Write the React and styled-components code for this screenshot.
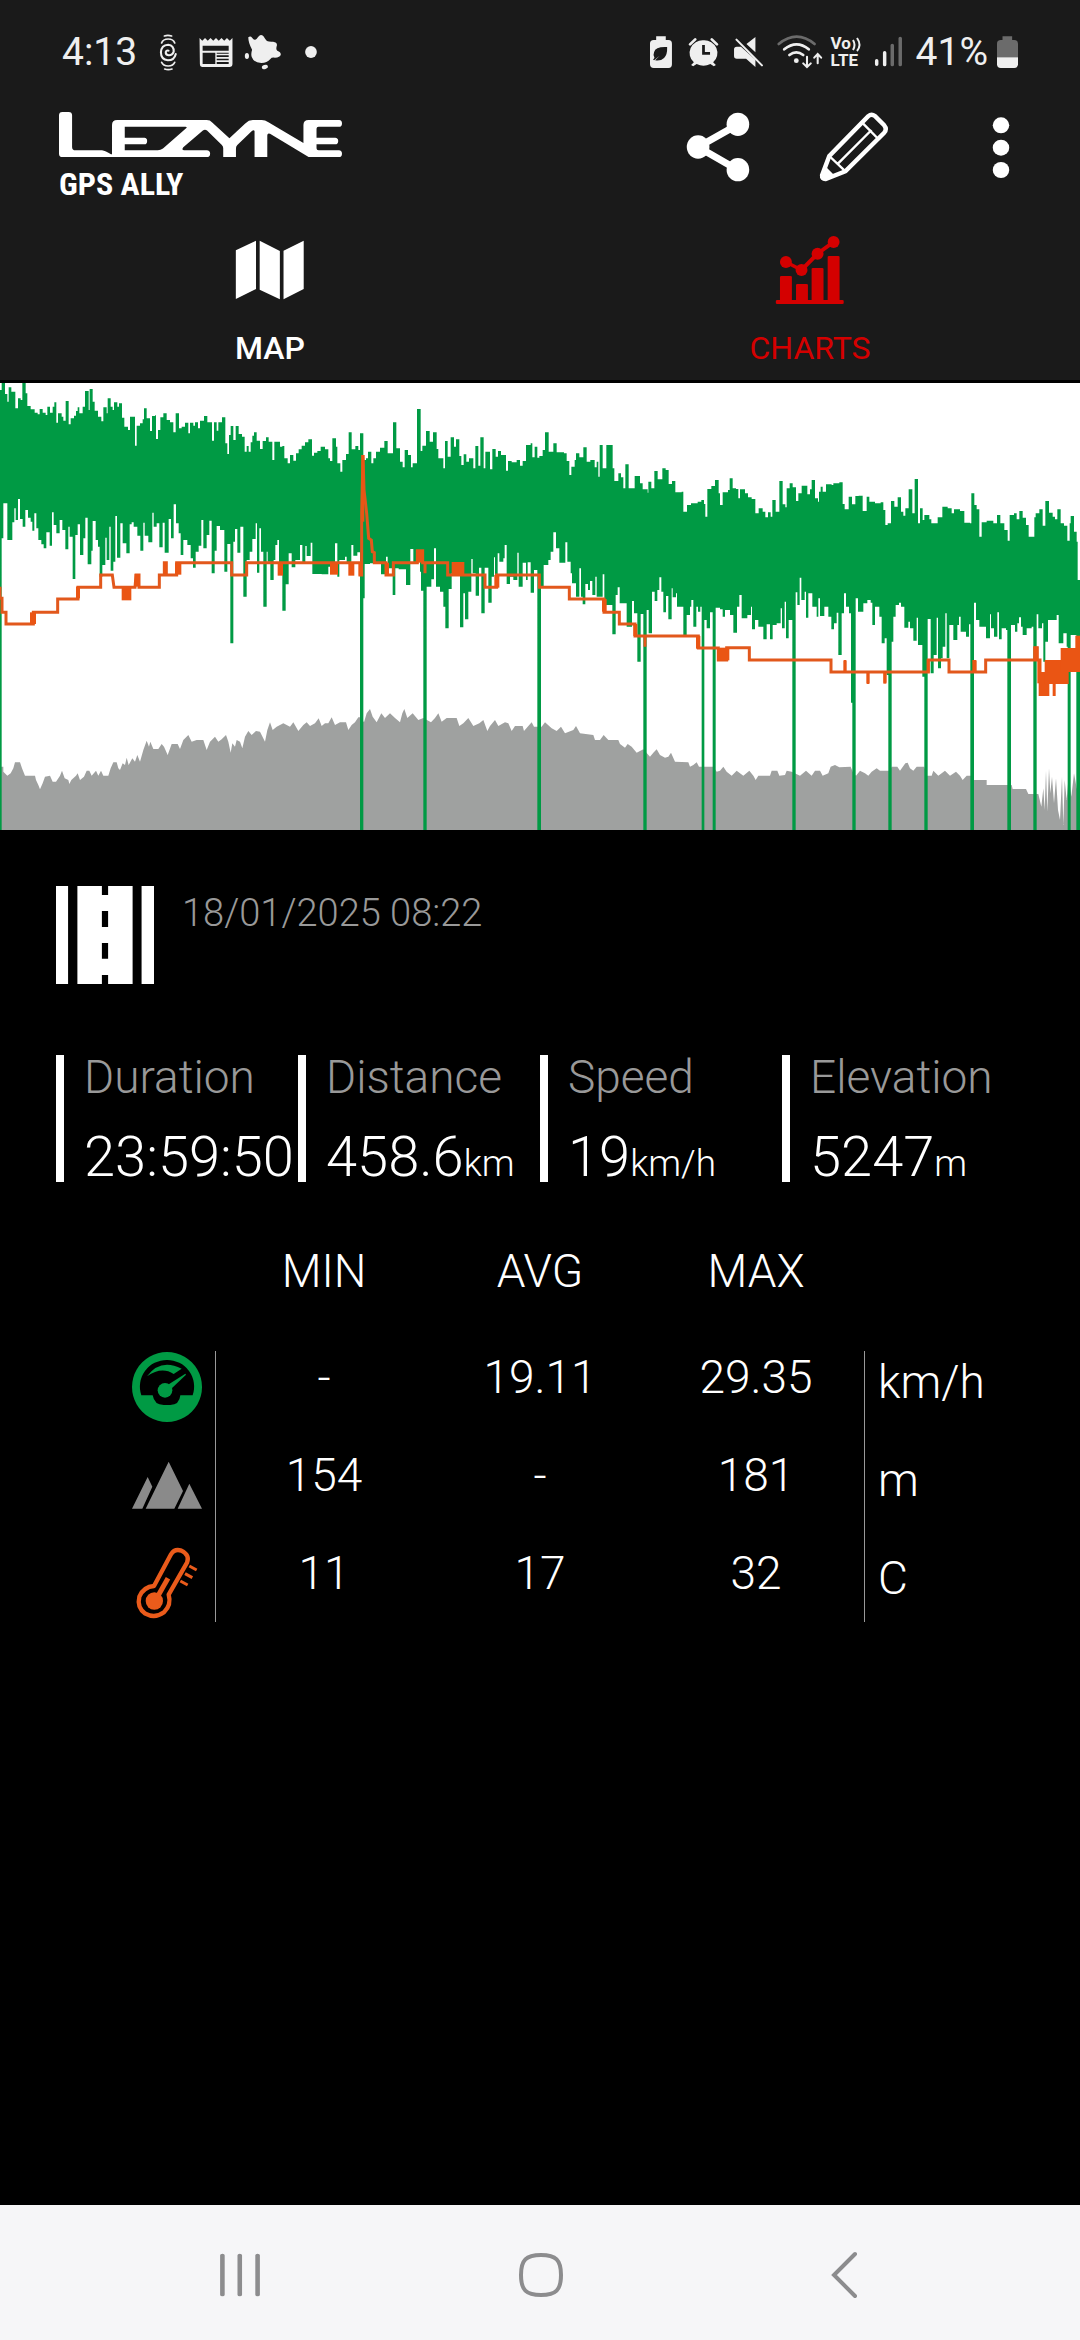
import React from "react";
import styled, { createGlobalStyle } from "styled-components";

const GlobalStyle = createGlobalStyle`
  *, *::before, *::after { box-sizing: border-box; }
  body {
    margin: 0;
    background: #000;
    color: #fff;
    font-family: Roboto, "Liberation Sans", sans-serif;
  }
  button {
    margin: 0;
    padding: 0;
    border: 0;
    background: none;
    color: inherit;
    font: inherit;
  }
`;

const Screen = styled.div`
  display: flex;
  flex-direction: column;
  min-height: 100vh;
`;

const Header = styled.header`
  background: #1a1a1a;
  padding-bottom: 12px;
`;

const StatusBar = styled.div`
  display: flex;
  justify-content: space-between;
  align-items: center;
  height: 104px;
  padding: 0 62px;
  color: #efefef;
`;

const StatusGroup = styled.div`
  display: flex;
  align-items: center;
  gap: ${(p) => p.$gap}px;
`;

const StatusText = styled.span`
  font-size: 39px;
  line-height: 48px;
`;

const NoticeIcons = styled.div`
  display: flex;
  margin-left: 7px;
`;

const Drawing = styled.svg`
  display: block;
  flex: none;
  width: ${(p) => p.$w}px;
  height: ${(p) => p.$h}px;
  overflow: visible;
  fill: currentColor;
`;

const Volte = styled.span`
  display: flex;
  flex-direction: column;
  width: 31px;
  font-size: 17px;
  font-weight: 700;
  line-height: 17px;
`;

const VolteTop = styled.span`
  display: flex;
  align-items: center;
`;

const Toolbar = styled.div`
  display: flex;
  justify-content: space-between;
  align-items: flex-start;
  padding: 8px 33px 0 59px;
`;

const Brand = styled.div`
  display: flex;
  flex-direction: column;
  gap: 7px;
`;

const BrandName = styled.span`
  font-family: "Liberation Sans Narrow", "Roboto Condensed", Roboto, sans-serif;
  font-size: 32px;
  font-weight: 700;
  line-height: 40px;
`;

const Actions = styled.div`
  display: flex;
  gap: 66px;
`;

const IconButton = styled.button`
  display: flex;
  justify-content: center;
`;

const Tabs = styled.div`
  display: grid;
  grid-template-columns: 1fr 1fr;
  padding-top: 30px;
`;

const Tab = styled.button`
  display: flex;
  flex-direction: column;
  align-items: center;
  gap: 22px;
  color: ${(p) => (p.$active ? "#d40000" : "#fff")};
  font-weight: ${(p) => (p.$active ? 400 : 500)};
`;

const TabLabel = styled.span`
  font-size: 32px;
  line-height: 40px;
`;

const ChartPanel = styled.section`
  margin-top: 3px;
  background: #fff;
`;

const ChartSvg = styled.svg`
  display: block;
  width: 100%;
  height: 447px;
`;

const Details = styled.main`
  flex: 1;
  padding-top: 56px;
`;

const RideHeader = styled.div`
  display: flex;
  align-items: flex-start;
  gap: 28px;
  padding: 0 56px;
`;

const RideDate = styled.time`
  color: #999;
  font-size: 38px;
  font-weight: 300;
  line-height: 54px;
`;

const Stats = styled.dl`
  display: grid;
  grid-template-columns: repeat(4, 1fr);
  margin: 71px 0 0;
  padding: 0 56px;
`;

const Stat = styled.div`
  display: flex;
  flex-direction: column;
  gap: 33px;
  min-width: 0;
  padding-left: 20px;
  border-left: 8px solid #fff;
  font-weight: 300;
  white-space: nowrap;
`;

const StatLabel = styled.dt`
  color: #999;
  font-size: 46px;
  line-height: 44px;
`;

const StatValue = styled.dd`
  margin: 0;
  font-size: 56px;
  line-height: 50px;
`;

const StatUnit = styled.span`
  font-size: 37px;
  line-height: 1px;
`;

const Summary = styled.table`
  width: 100%;
  margin-top: 63px;
  border-collapse: separate;
  border-spacing: 0;
  table-layout: fixed;
  font-size: 46px;
  font-weight: 300;
  line-height: 52px;
  text-align: center;
`;

const HeadCell = styled.th`
  padding: 0 0 54px;
  font-weight: 300;
`;

const Row = styled.tr`
  & > * { padding: 0 0 26px; vertical-align: top; }
  &:last-child > * { padding-bottom: 3px; }
`;

const MetricCell = styled.th`
  border-right: 1px solid #999;
  color: ${(p) => p.$color};
`;

const MetricIcon = styled.div`
  display: flex;
  justify-content: flex-end;
  padding-right: 12px;
`;

const UnitCell = styled.td`
  border-left: 1px solid #999;
  line-height: 62px;
  text-align: left;
`;

const UnitText = styled.span`
  padding-left: 13px;
`;

const NavBar = styled.nav`
  display: grid;
  grid-template-columns: repeat(3, 1fr);
  align-items: center;
  justify-items: center;
  height: 135px;
  padding: 5px 86px 0 89px;
  background: #f6f6f8;
  color: #8c8c8e;
`;

function Icon({ box, w, h, children }) {
  return (
    <Drawing viewBox={box} $w={w} $h={h} preserveAspectRatio="none" aria-hidden="true">
      {children}
    </Drawing>
  );
}

/* Chart samples: "x,y" pairs, three per-section strings, each section 1080 units wide. */
const SECTION = 1080;
const FLOOR = 1350;

const parse = (sections) =>
  sections.flatMap((text, i) =>
    text.trim().split(/\s+/).map((pair) => {
      const [x, y] = pair.split(",").map(Number);
      return [x + i * SECTION, y];
    })
  );

const SPEED_HIGH = parse([
  `0,30 5,9 15,42 22,65 26,22 34,35 46,85 54,55 62,60 67,9 77,40 82,78 92,88 104,98 113,103 119,87 128,98 137,105 142,80 150,98 158,80 163,67 169,128 174,100 185,110 190,122 197,63 206,133 212,115 222,107 228,93 233,82 238,100 248,80 255,33 266,90 269,27 278,65 284,92 294,110 304,124 310,82 320,100 323,55 332,80 338,90 342,67 352,80 357,70 366,113 373,140 384,150 390,110 405,197 410,137 420,130 428,118 432,85 440,115 450,153 456,108 466,105 468,177 474,150 481,112 490,100 500,120 510,127 520,157 527,100 537,145 545,140 555,128 565,160 570,128 580,137 585,127 594,145 600,122 612,108 622,127 636,182 642,127 650,152 655,127 666,112 676,190 682,222 687,165 692,138 700,180 707,138 716,162 726,170 734,215 740,198 746,215 752,187 757,167 762,157 770,182 780,207 788,183 798,172 806,185 817,240 823,185 840,200 847,198 853,235 863,250 870,225 880,242 888,220 896,208 905,197 915,187 925,178 936,227 942,218 952,213 962,200 975,208 985,235 990,243 997,175 1008,200 1012,250 1021,275 1027,240 1038,222 1046,157 1055,208 1066,198 1075,210`,
  `0,160 10,240 18,235 24,215 34,250 40,235 48,215 60,203 73,183 83,220 99,127 109,205 120,245 128,262 134,210 144,225 153,262 158,250 171,87 182,213 187,197 198,153 209,185 219,157 230,207 235,235 250,265 255,183 263,230 272,172 282,200 288,178 298,228 304,255 311,223 319,245 327,235 340,265 346,198 355,257 361,172 371,265 376,215 390,268 397,207 407,230 414,213 423,225 438,272 444,243 455,247 470,240 480,257 488,243 498,195 512,190 517,232 524,200 532,233 538,228 548,210 555,157 566,215 580,190 590,217 612,220 620,243 628,285 634,260 644,240 648,220 658,232 670,202 680,245 691,240 704,262 710,245 715,290 719,195 728,265 739,195 758,265 763,303 775,280 783,292 790,325 796,253 806,325 824,288 840,310 848,328 863,338 865,305 874,325 883,273 893,298 907,265 917,270 926,312 936,303 946,337 965,335 970,395 981,375 993,370 1013,365 1024,360 1032,372 1036,410 1042,327 1054,318 1065,300 1076,340`,
  `0,375 8,337 24,330 29,295 38,325 48,327 55,355 60,328 75,340 84,352 95,357 106,400 116,385 128,395 136,412 144,397 152,410 157,360 167,395 178,303 188,373 196,382 200,325 209,310 218,322 228,363 235,340 245,317 262,343 270,328 275,300 285,355 294,365 297,335 302,320 308,335 318,313 335,315 340,310 358,307 368,372 374,388 386,350 396,373 406,348 416,347 428,393 440,350 448,365 465,370 482,367 490,390 496,435 503,430 513,363 523,380 533,352 543,395 550,407 556,385 566,328 577,400 584,297 594,430 600,385 608,420 613,405 628,418 634,430 653,412 667,380 683,385 695,400 702,388 720,393 733,428 750,430 754,340 763,375 770,388 778,470 785,427 800,422 820,430 831,405 841,430 853,450 863,482 869,405 882,400 890,418 898,393 908,413 918,435 926,470 943,412 947,400 958,388 968,437 976,363 987,398 998,410 1005,418 1012,388 1022,430 1032,437 1042,482 1049,430 1052,408 1062,455 1070,485 1073,600`,
]);

const SPEED_LOW = parse([
  `0,1350 5,475 10,370 22,480 37,427 43,385 47,420 54,357 60,417 68,440 76,390 84,413 92,425 97,452 103,400 109,445 115,480 124,493 131,505 139,457 149,497 156,397 161,435 169,460 179,420 187,450 196,508 205,440 209,470 218,597 226,465 233,433 240,525 250,475 256,413 263,553 274,512 278,423 287,480 294,500 299,590 307,555 316,473 320,540 328,440 332,572 340,545 346,408 351,533 361,430 368,490 379,520 389,433 395,427 401,440 412,467 421,512 430,428 434,467 445,487 457,398 461,440 470,430 478,502 488,428 494,518 506,417 513,475 521,373 528,430 536,460 542,525 550,480 562,495 572,535 579,563 587,515 596,497 604,420 610,505 620,465 628,422 635,580 644,512 650,438 660,450 673,575 682,492 691,790 700,485 705,447 712,518 721,440 730,650 740,540 749,515 757,477 767,430 771,578 778,445 783,515 790,680 800,515 803,545 811,600 821,540 826,495 832,480 837,548 847,692 857,613 866,520 875,562 886,540 900,495 907,550 916,498 920,528 932,488 937,582 965,583 985,560 1005,490 1012,590 1018,540 1035,530 1040,550 1054,495 1060,527 1072,517`,
  `0,1350 10,655 14,552 30,550 63,583 78,530 83,565 98,645 106,565 116,568 138,615 151,507 160,550 170,535 180,575 183,632 190,1350 200,620 214,598 222,505 228,620 240,635 250,680 256,745 266,627 275,580 300,742 310,640 315,718 325,635 334,537 338,580 347,647 357,563 364,700 374,563 385,668 395,590 402,532 405,600 413,520 418,545 430,535 434,495 440,612 450,590 460,600 472,518 476,620 488,548 498,600 503,547 512,638 522,570 532,1350 543,620 551,555 565,540 572,515 580,457 588,505 598,548 616,487 622,545 632,580 636,610 648,650 658,565 663,650 668,673 676,612 684,630 690,603 697,645 706,590 710,650 728,583 733,675 757,763 767,645 773,622 779,670 800,740 816,663 822,700 832,845 842,702 850,1350 860,690 866,760 876,635 884,663 892,630 898,592 904,635 910,697 918,648 925,718 935,625 938,652 948,640 951,680 970,770 980,705 990,680 994,660 1000,740 1009,680 1014,695 1021,680 1025,1350 1033,720 1040,745 1050,697 1058,1350 1067,683`,
  `0,688 8,710 15,690 30,705 40,758 51,680 58,645 65,715 82,705 93,680 96,748 105,720 115,740 130,778 140,733 150,778 158,735 170,730 182,685 186,745 194,665 198,775 206,720 217,1350 227,637 232,675 239,593 244,660 254,635 258,713 265,640 277,680 290,710 295,655 300,708 313,680 325,710 334,748 342,730 350,698 355,825 365,700 372,640 378,680 387,700 393,968 397,1350 407,655 414,695 430,670 442,660 452,668 457,735 465,680 478,710 485,790 494,775 500,885 505,1350 515,785 520,710 527,675 537,668 543,680 553,743 565,725 570,745 580,782 590,713 594,795 607,890 613,1350 623,717 632,880 641,825 650,713 654,865 663,835 668,800 676,700 680,835 688,735 700,780 712,735 717,710 722,755 738,770 747,733 751,1350 762,668 768,720 778,740 798,775 810,703 813,745 822,770 832,697 837,778 845,745 858,750 862,1350 873,735 885,755 892,730 897,712 903,740 908,765 920,745 935,740 940,1350 950,703 955,745 966,730 970,845 976,785 984,720 1010,705 1016,790 1030,760 1040,800 1043,1350 1052,765 1069,1350`,
]);

const ALTITUDE = parse([
  `0,1160 10,1160 10,1175 22,1187 32,1180 40,1165 45,1147 60,1147 66,1165 75,1187 105,1187 108,1200 115,1215 120,1228 128,1210 135,1190 150,1187 158,1205 168,1205 180,1187 186,1172 194,1195 205,1200 208,1212 214,1200 228,1187 233,1180 240,1200 252,1190 260,1172 268,1172 275,1187 288,1172 295,1187 303,1172 310,1187 325,1187 332,1165 340,1147 350,1147 355,1165 360,1170 368,1150 375,1155 380,1133 386,1155 397,1135 405,1145 412,1125 420,1145 430,1110 440,1082 447,1100 451,1085 460,1107 475,1107 485,1092 492,1100 503,1125 515,1092 533,1092 540,1107 550,1080 565,1065 575,1085 590,1080 610,1080 620,1110 630,1085 645,1070 655,1085 665,1078 678,1065 685,1085 692,1118 697,1090 705,1100 710,1080 720,1085 727,1105 735,1070 745,1053 755,1065 768,1053 780,1055 795,1085 802,1050 810,1027 818,1050 830,1040 850,1030 870,1040 880,1027 895,1053 910,1035 920,1027 930,1038 945,1030 956,1015 965,1038 975,1030 985,1030 995,1012 1005,1035 1020,1027 1038,1027 1045,1050 1055,1035 1065,1027 1075,1012`,
  `0,1012 12,1027 20,1000 30,987 38,1010 50,1027 64,1000 75,1014 90,1000 105,1014 120,1027 127,1000 133,987 142,1014 158,1000 175,1020 190,1014 213,1027 225,1014 235,1000 245,1025 260,1014 290,1014 298,1038 310,1030 325,1014 340,1038 358,1030 370,1020 382,1053 390,1038 405,1020 415,1038 435,1027 445,1030 455,1053 465,1038 488,1038 492,1053 505,1038 515,1027 522,1040 545,1040 555,1027 575,1045 590,1053 603,1040 615,1060 640,1050 648,1038 660,1060 700,1065 705,1080 720,1080 731,1065 745,1080 775,1080 780,1092 795,1103 803,1092 815,1100 830,1118 850,1108 870,1130 880,1118 890,1108 900,1125 915,1133 925,1130 933,1118 945,1145 985,1147 990,1160 1000,1155 1010,1147 1017,1160 1060,1160 1070,1175`,
  `0,1172 10,1160 20,1175 35,1187 50,1172 70,1187 88,1172 100,1187 107,1200 115,1187 150,1187 155,1172 172,1172 178,1187 195,1185 200,1172 215,1175 240,1187 258,1172 275,1187 285,1172 300,1172 308,1187 325,1180 332,1160 345,1155 358,1162 392,1160 400,1180 408,1187 420,1172 435,1180 445,1187 455,1175 470,1165 480,1172 510,1172 515,1160 532,1160 540,1172 556,1150 563,1148 570,1165 580,1172 590,1160 613,1160 620,1187 635,1187 640,1172 655,1187 675,1172 690,1187 708,1175 720,1187 728,1200 740,1187 757,1187 760,1200 800,1200 800,1215 875,1215 878,1227 918,1227 925,1242 955,1242 964,1280 970,1225 974,1290 978,1172 982,1295 987,1165 991,1240 996,1190 1002,1270 1008,1195 1014,1290 1020,1320 1026,1190 1030,1335 1034,1200 1040,1260 1046,1187 1054,1250 1062,1180 1070,1225 1080,1240`,
]);

const TEMPERATURE = parse([
  `0,620 0,655 6,655 6,697 18,697 18,732 100,732 100,697 173,697 173,657 234,657 234,622 302,622 302,585 337,585 342,622 405,622 408,585 417,585 417,622 478,622 478,585 493,585 493,548 499,548 499,585 530,585 530,548 695,548 695,585 740,585 740,548 1075,548`,
  `0,548 0,585 5,585 5,400 9,225 12,330 20,400 26,475 34,480 37,515 43,518 43,548 78,548 78,585 100,585 100,548 172,548 172,512 188,512 188,548 195,548 195,580 195,548 263,548 263,585 375,585 375,622 410,622 410,585 538,585 538,622 628,622 628,657 732,657 732,697 778,697 778,732 825,732 825,768 855,768 855,800 855,768 1015,768 1015,804 1075,804 1075,840`,
  `0,840 20,840 20,803 88,803 88,840 333,840 333,876 375,876 375,842 375,876 444,876 444,910 444,876 495,876 495,908 495,876 625,876 625,840 687,840 687,876 765,876 765,842 765,876 797,876 797,840 945,840 945,803 952,803 952,840 960,840 960,876`,
]);

/* Spans where the temperature flickers between two readings: x, y, width, height. */
const FLICKER = [
  [[90, 697, 18, 35], [228, 620, 12, 35], [365, 622, 29, 39], [404, 582, 16, 38], [492, 546, 9, 38], [525, 548, 19, 36], [833, 548, 16, 39], [990, 548, 24, 36], [1045, 548, 18, 39], [1076, 548, 10, 39]],
  [[4, 225, 9, 200], [75, 548, 12, 38], [168, 510, 24, 38], [275, 546, 38, 40], [403, 585, 15, 38], [726, 657, 14, 38], [820, 732, 12, 36], [1008, 768, 13, 38], [1071, 804, 15, 38]],
  [[0, 803, 28, 38], [371, 840, 8, 36], [440, 876, 8, 36], [490, 876, 9, 35], [620, 838, 9, 40], [757, 840, 12, 36], [940, 800, 14, 40], [952, 840, 11, 70], [956, 876, 32, 72], [974, 840, 72, 72], [998, 912, 9, 36], [1022, 804, 58, 72], [1066, 767, 14, 40]],
];

const END = SECTION * 3;

function steps(points) {
  return points
    .map(([x, y], i) => `H${x}V${y}` + (i === points.length - 1 ? `H${END}` : ""))
    .join("");
}

function stepsBack(points) {
  let right = END;
  let d = "";
  for (let i = points.length - 1; i >= 0; i -= 1) {
    d += `L${right} ${points[i][1]}H${points[i][0]}`;
    right = points[i][0];
  }
  return d;
}

const speedArea = `M0 30${steps(SPEED_HIGH)}${stepsBack(SPEED_LOW)}Z`;
const altitudeArea = `M0 ${FLOOR}${ALTITUDE.map(([x, y]) => `L${x} ${y}`).join("")}V${FLOOR}Z`;
const temperatureLine = TEMPERATURE.map(([x, y], i) => `${i ? "L" : "M"}${x} ${y}`).join("");

function RideChart() {
  return (
    <ChartSvg viewBox="0 9 3240 1341" preserveAspectRatio="none" role="img" aria-label="Speed, elevation and temperature">
      <path d={altitudeArea} fill="#9fa1a0" />
      <path d={speedArea} fill="#009a44" />
      <path d={temperatureLine} fill="none" stroke="#e2581c" strokeWidth="9" />
      <g fill="#ea5514">
        {FLICKER.flatMap((spans, i) =>
          spans.map(([x, y, w, h]) => (
            <rect key={`${i}-${x}-${y}`} x={x + i * SECTION} y={y} width={w} height={h} />
          ))
        )}
      </g>
    </ChartSvg>
  );
}

function Status() {
  return (
    <StatusBar>
      <StatusGroup $gap={0}>
        <StatusText>4:13</StatusText>
        <NoticeIcons>
          <Icon box="421 96 139 120" w={48} h={40}>
            <g fill="none" stroke="currentColor" strokeWidth="5" strokeLinecap="round">
              <path d="M480 108q10-4 21 0M472 129Q476 117 491 117T510 129M472 187Q476 198 491 198T510 187M481 207q10 4 21 0" />
              <path d="M513 162Q509 181 490 181Q470 179 470 157Q471 135 491 134Q508 136 507 155Q503 167 492 166Q483 164 484 156Q486 150 492 152" strokeWidth="6" />
            </g>
          </Icon>
          <Icon box="560 96 140 120" w={48} h={40}>
            <path fillRule="evenodd" d="M582 114l8 8 8-8 8 8 8-8 8 8 8-8 8 8 8-8 8 8 8-8 8 8 8-8v78q0 9-9 9h-78q-8 0-8-9zM591 137v15h76v-15zM591 158v34h37v-34zM632 158v3h35v-3zM632 166v5h35v-5zM632 176v5h35v-5zM632 186v6h35v-6z" />
          </Icon>
          <Icon box="700 96 139 120" w={48} h={40}>
            <path d="M724 112q6-5 11 1q5 8 9 6q4-1 9-9q7-10 15-1q5 9 10 14q7 3 18 2q12 2 11 11q-4 13 1 16q11 4 10 12q-2 8-17 9q-10-1-13 4q-10 12-26 12q-22 0-28-18q-3-9 1-22q-11-20-11-37z" />
            <ellipse cx="720" cy="168" rx="6" ry="9" />
            <ellipse cx="772" cy="201" rx="9" ry="6" transform="rotate(-20 772 201)" />
          </Icon>
          <Icon box="839 96 140 120" w={48} h={40}>
            <ellipse cx="906" cy="156" rx="17" ry="18" />
          </Icon>
        </NoticeIcons>
      </StatusGroup>
      <StatusGroup $gap={13}>
        <StatusGroup $gap={14}>
          <Icon box="311 96 70 120" w={24} h={40}>
            <path fillRule="evenodd" d="M329 109h28v11h8q10 0 10 11v62q0 11-10 11h-43q-11 0-11-11v-62q0-11 11-11h7zM361 141q-34-2-38 15q-4 10 1 17l-4 6 3 2 16-14-13 14q16 3 26-7q10-10 9-33z" />
          </Icon>
          <Icon box="421 96 90 120" w={31} h={40}>
            <path fillRule="evenodd" d="M466 121a38 38 0 0 1 28 66l8 8-6 4-10-7q-20 11-40 0l-10 7-6-4 8-8a38 38 0 0 1 28-66zM462 135v29h23v-8h-15v-21z" />
            <path d="M427 133l15-15M505 133l-15-15" stroke="currentColor" strokeWidth="8" strokeLinecap="round" />
          </Icon>
          <Icon box="552 96 87 120" w={30} h={40}>
            <path d="M591 132l26-21v46zM555 148q0-8 8-8h12l42 39v22l-27-25h-27q-8 0-8-8z" />
            <path d="M562 119l74 77" stroke="currentColor" strokeWidth="6" strokeLinecap="round" />
          </Icon>
          <Icon box="680 96 116 120" w={40} h={40}>
            <g fill="none" stroke="currentColor" strokeWidth="8" strokeLinecap="round">
              <path d="M685 132q52-44 104 0" stroke="#6b6b6b" />
              <path d="M701 148q36-30 71 0M716 165q20-16 40 0" />
              <path d="M767 170v30m-11-10l11 11 11-11M798 190v-28m-10 11l10-11 10 11" strokeWidth="6" />
            </g>
            <circle cx="736" cy="182" r="7" />
          </Icon>
          <Volte>
            <VolteTop>
              Vo
              <Drawing viewBox="0 0 10 16" $w={10} $h={16} aria-hidden="true">
                <path d="M2 4q3 5 0 10M6 2q5 7 0 13" fill="none" stroke="currentColor" strokeWidth="2" />
              </Drawing>
            </VolteTop>
            <span>LTE</span>
          </Volte>
          <Icon box="967 96 78 120" w={27} h={40}>
            <g stroke="currentColor" strokeWidth="10" strokeLinecap="round">
              <path d="M969 182v11M992 158v36" />
              <path d="M1014 136v58M1037 115v79" stroke="#6b6b6b" />
            </g>
          </Icon>
        </StatusGroup>
        <StatusGroup $gap={9}>
          <StatusText>41%</StatusText>
          <Icon box="1327 96 61 120" w={21} h={40}>
            <path fill="#6b6b6b" d="M1343 109h28v11h6q11 0 11 11v41h-61v-41q0-11 11-11h5z" />
            <path d="M1327 172h61v21q0 11-11 11h-39q-11 0-11-11z" />
          </Icon>
        </StatusGroup>
      </StatusGroup>
    </StatusBar>
  );
}

function Logo() {
  return (
    <Drawing viewBox="171 336 822 134" $w={283} $h={45} preserveAspectRatio="none" role="img" aria-label="Lezyne">
      <path
        fillRule="evenodd"
        d="M171 346Q171 336 181 336H199Q209 336 209 346V440Q209 450 219 450H296Q306 451 322 462H325V375Q325 360 340 360H600Q610 360 616 367L666 414L712 370Q722 360 734 360H760Q770 360 778 366L881 428V375Q881 360 896 360H985Q993 361 993 370Q993 380 984 380H925Q919 380 919 386V413H973Q982 414 982 422Q982 432 973 432H919V444Q919 450 925 450H984Q993 451 993 460Q993 470 984 470H896L784 401Q776 398 776 406V470H739V393Q738 388 732 392L689 434Q685 438 685 444V470H648V444Q648 438 644 434L601 391Q595 386 589 391L532 441Q526 450 535 450H600Q610 451 610 460Q610 470 600 470H181Q171 470 171 460ZM362 380V413H419Q427 414 427 422Q427 432 419 432H362V450H458Q466 450 473 445L541 384Q544 380 538 380Z"
      />
    </Drawing>
  );
}

const GaugeIcon = () => (
  <Icon box="93 363 216 216" w={72} h={72}>
    <path fillRule="evenodd" d="M201 366a105 105 0 1 0 .1 0zM201 390a80 80 0 0 1 77 106h-37q-3 29-30 29h-20q-28 0-33-29h-34a80 80 0 0 1 77-106z" />
    <path d="M141 439q40-55 104-23l-24 16q-36-24-80 7z" />
    <circle cx="195" cy="481" r="22" />
    <path d="M204 464l52-33 2 3-45 43z" />
  </Icon>
);

const MountainIcon = () => (
  <Icon box="93 657 216 216" w={72} h={72}>
    <path d="M96 836l47-95 14 29-30 66zM137 836l69-141 43 88-26 53zM233 836l35-75 38 75z" />
  </Icon>
);

const ThermometerIcon = () => (
  <Icon box="93 951 216 216" w={72} h={72}>
    <g fill="none" stroke="currentColor">
      <path d="M162 1068L213 973q11-18 31-11q26 13 17 36L206 1094q9 30-14 53q-27 20-56 4q-26-19-18-51q13-30 44-32z" strokeWidth="13" strokeLinejoin="round" />
      <path d="M204 1045L172 1101" strokeWidth="15" />
      <path d="M268 1008l22 12M255 1031l22 12M241 1053l22 12" strokeWidth="9" />
    </g>
    <circle cx="163" cy="1113" r="26" />
  </Icon>
);

const STATS = [
  { label: "Duration", value: "23:59:50" },
  { label: "Distance", value: "458.6", unit: "km" },
  { label: "Speed", value: "19", unit: "km/h" },
  { label: "Elevation", value: "5247", unit: "m" },
];

const METRICS = [
  { name: "Speed", icon: GaugeIcon, color: "#009a44", values: ["-", "19.11", "29.35"], unit: "km/h" },
  { name: "Altitude", icon: MountainIcon, color: "#8a8a8a", values: ["154", "-", "181"], unit: "m" },
  { name: "Temperature", icon: ThermometerIcon, color: "#ea5b1b", values: ["11", "17", "32"], unit: "C" },
];

export default function App() {
  return (
    <Screen>
      <GlobalStyle />
      <Header>
        <Status />
        <Toolbar>
          <Brand>
            <Logo />
            <BrandName>GPS ALLY</BrandName>
          </Brand>
          <Actions>
            <IconButton aria-label="Share">
              <Icon box="415 336 204 210" w={70} h={70}>
                <path d="M574 374L459 441L574 509" fill="none" stroke="currentColor" strokeWidth="21" />
                <ellipse cx="575" cy="373" rx="33" ry="35" />
                <ellipse cx="459" cy="441" rx="33" ry="35" />
                <ellipse cx="575" cy="509" rx="33" ry="35" />
              </Icon>
            </IconButton>
            <IconButton aria-label="Edit">
              <Icon box="810 336 204 210" w={70} h={70}>
                <g fill="none" stroke="currentColor" strokeLinejoin="round">
                  <path d="M840 468L954 348Q963 340 973 348L1000 376Q1009 387 1000 398L887 514L830 537Q818 538 819 526Z" strokeWidth="13" />
                  <path d="M938 370L980 414M840 468L887 514M963 390L866 490" strokeWidth="7" />
                </g>
                <path d="M830 500L856 527L826 542L813 532Z" />
              </Icon>
            </IconButton>
            <IconButton aria-label="More options">
              <Icon box="1205 336 268 210" w={92} h={70}>
                <circle cx="1339" cy="376" r="24" />
                <circle cx="1339" cy="443" r="24" />
                <circle cx="1339" cy="510" r="24" />
              </Icon>
            </IconButton>
          </Actions>
        </Toolbar>
        <Tabs role="tablist">
          <Tab role="tab" aria-selected="false">
            <Icon box="118 42 157 216" w={72} h={72}>
              <path d="M122 91L166 62V207L122 237ZM174 62L218 93V238L174 209ZM226 92L270 62V207L226 238Z" />
            </Icon>
            <TabLabel>MAP</TabLabel>
          </Tab>
          <Tab role="tab" aria-selected="true" $active>
            <Icon box="1294 42 157 216" w={72} h={72}>
              <path d="M1320 126L1354 150L1389 101L1424 66" fill="none" stroke="currentColor" strokeWidth="10" />
              <ellipse cx="1320" cy="126" rx="13" ry="18" />
              <ellipse cx="1354" cy="150" rx="13" ry="18" />
              <ellipse cx="1389" cy="101" rx="13" ry="18" />
              <ellipse cx="1424" cy="66" rx="13" ry="18" />
              <rect x="1307" y="168" width="26" height="76" rx="3" />
              <rect x="1342" y="192" width="26" height="52" rx="3" />
              <rect x="1376" y="144" width="26" height="100" rx="3" />
              <rect x="1411" y="108" width="26" height="136" rx="3" />
              <rect x="1298" y="240" width="148" height="12" rx="3" />
            </Icon>
            <TabLabel>CHARTS</TabLabel>
          </Tab>
        </Tabs>
      </Header>

      <ChartPanel>
        <RideChart />
      </ChartPanel>

      <Details>
        <RideHeader>
          <Icon box="163 78 284 294" w={98} h={98}>
            <path fillRule="evenodd" d="M163 78H198V372H163ZM225 78H385V372H225ZM411 78H447V372H411ZM296 78V105H314V78ZM296 153V201H314V153ZM296 249V296H314V249ZM296 345V372H314V345Z" />
          </Icon>
          <RideDate dateTime="2025-01-18T08:22">18/01/2025 08:22</RideDate>
        </RideHeader>

        <Stats>
          {STATS.map((s) => (
            <Stat key={s.label}>
              <StatLabel>{s.label}</StatLabel>
              <StatValue>
                {s.value}
                {s.unit && <StatUnit>{s.unit}</StatUnit>}
              </StatValue>
            </Stat>
          ))}
        </Stats>

        <Summary>
          <thead>
            <tr>
              <HeadCell as="td" />
              <HeadCell scope="col">MIN</HeadCell>
              <HeadCell scope="col">AVG</HeadCell>
              <HeadCell scope="col">MAX</HeadCell>
              <HeadCell as="td" />
            </tr>
          </thead>
          <tbody>
            {METRICS.map(({ name, icon: MetricGlyph, color, values, unit }) => (
              <Row key={name}>
                <MetricCell scope="row" aria-label={name} $color={color}>
                  <MetricIcon>
                    <MetricGlyph />
                  </MetricIcon>
                </MetricCell>
                {values.map((v, i) => (
                  <td key={i}>{v}</td>
                ))}
                <UnitCell>
                  <UnitText>{unit}</UnitText>
                </UnitCell>
              </Row>
            ))}
          </tbody>
        </Summary>
      </Details>

      <NavBar aria-label="System">
        <IconButton aria-label="Recent apps">
          <Icon box="78 213 105 144" w={48} h={48}>
            <path d="M92 226V344M130 226V344M169 226V344" fill="none" stroke="currentColor" strokeWidth="10" strokeLinecap="round" />
          </Icon>
        </IconButton>
        <IconButton aria-label="Home">
          <Icon box="0 0 48 48" w={48} h={48}>
            <path d="M24 4C39 4 44 9 44 24S39 44 24 44S4 39 4 24S9 4 24 4Z" fill="none" stroke="currentColor" strokeWidth="4" />
          </Icon>
        </IconButton>
        <IconButton aria-label="Back">
          <Icon box="0 0 48 48" w={48} h={48}>
            <path d="M36 3L15 24L36 45" fill="none" stroke="currentColor" strokeWidth="4" strokeLinecap="round" />
          </Icon>
        </IconButton>
      </NavBar>
    </Screen>
  );
}
